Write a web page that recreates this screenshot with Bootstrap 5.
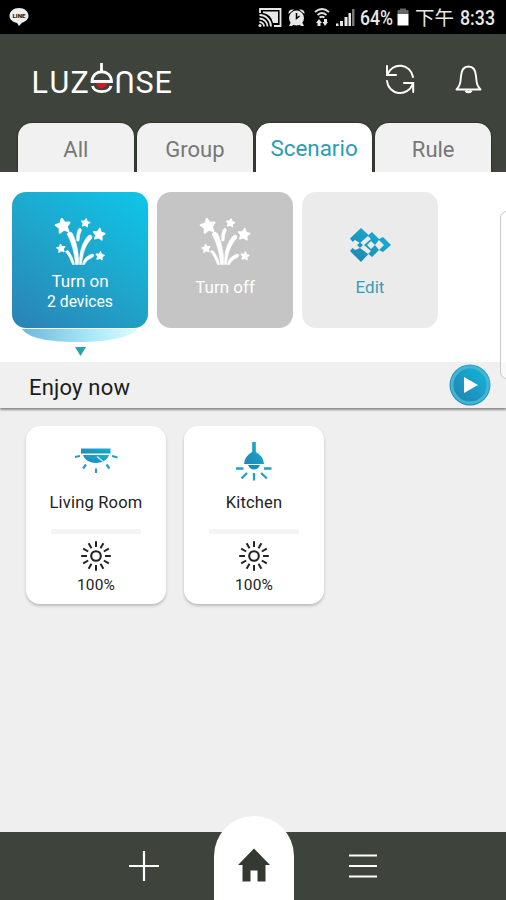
<!DOCTYPE html>
<html lang="en">
<head>
<meta charset="utf-8">
<meta name="viewport" content="width=device-width, initial-scale=1">
<title>Luzense</title>
<link href="https://cdn.jsdelivr.net/npm/bootstrap@5.3.0/dist/css/bootstrap.min.css" rel="stylesheet">
<style>
body{font-family:Roboto,"Noto Sans CJK TC",sans-serif;background:#efefef;height:900px;overflow:hidden;line-height:1}
svg{display:block;flex:none}
svg text{font-family:Roboto,"Noto Sans CJK TC",sans-serif}
.statusbar{height:34px;background:#000}
.topbar{height:89px;background:#3e433c;padding:0 22px 0 32px}
.topicons{gap:38px}
.tabs{height:49px;background:#3e433c;padding:0 15px 0 18px;gap:3.5px}
.tabs a{flex:1;height:49px;border-radius:14px 14px 0 0;background:#f1f1f1;color:#777;font-size:22px;text-decoration:none;padding-top:4px;box-shadow:0 0 2px #111a10}
.tabs a.active{background:#fff;color:#2a9db3;padding-top:2px;font-size:22.4px}
.scenes{height:190px;padding:20px 0 0 12px;gap:9px}
.tile{width:136px;height:136px;border-radius:14px;background:#c5c5c5;color:#fff;font-size:17px}
.tile-on{background:linear-gradient(35deg,#2b82b5 0%,#1fa5cb 50%,#0fc3e6 95%)}
.tile-on svg,.tile-off svg{margin-top:26px}
.tile-on .title{margin-top:5px}
.tile-on .count{font-size:15.7px;margin-top:4px}
.tile-off .title{margin-top:11px}
.tile-edit{background:#ebebeb;color:#359eb7}
.tile-edit svg{margin-top:36px}
.tile-edit .title{margin-top:15px}
.swoosh{left:18px;top:157px;z-index:0}
.edge{right:-8px;top:39px;width:14px;height:168px;border:1.5px solid #c8c8c8;border-radius:8px;z-index:2;background:#fff9}
.nowbar{height:46px;background:#f0f0f0;padding:0 15px 0 29px;color:#1b1b1b;box-shadow:0 1.5px 2px #8c8c8c}
.nowbar span{font-size:22px;letter-spacing:.2px;padding-top:5px}
.devices{padding:18px 26px;gap:18px}
.device{width:140px;height:178px;border-radius:14px;background:#fff;box-shadow:0 2px 3px #bbb;color:#222}
.device .label{font-size:16.5px;letter-spacing:.2px;margin-top:13px}
.device .sep{width:90px;height:5px;background:#f4f4f4;margin-top:17px;border-radius:2px}
.device .sunny{margin-top:6px}
.device .level{font-size:15.5px;letter-spacing:.1px;margin-top:6px}
.bottom{height:68px;background:#3e433c;padding-left:129px;gap:190px}
.home{width:80px;height:84px;left:213.5px;bottom:0;background:#fff;border-radius:40px 40px 0 0}
.home svg{margin-top:31px}
</style>
<script src="https://cdn.jsdelivr.net/npm/bootstrap@5.3.0/dist/js/bootstrap.bundle.min.js"></script>
</head>
<body class="d-flex flex-column">
<svg width="0" height="0" class="position-absolute">
<defs>
<linearGradient id="blue" x1="0" y1="1" x2="1" y2="0"><stop offset="0" stop-color="#2383ae"/><stop offset="1" stop-color="#12b4dc"/></linearGradient>
<linearGradient id="pale"><stop offset="0" stop-color="#70b7dc"/><stop offset=".6" stop-color="#a9e9f8"/><stop offset="1" stop-color="#e0fcff"/></linearGradient>
<path id="star" d="M0-1 .3-.38 .96-.3 .48.16 .6.82 0 .5-.6.82-.48.16-.96-.3-.3-.38Z"/>
<symbol id="firework" viewBox="0 0 52 50">
<g fill="#fff" stroke="#fff" stroke-width=".3" stroke-linejoin="round">
<use href="#star" transform="translate(9 8) rotate(-10) scale(7.2)"/>
<use href="#star" transform="translate(31.500 5) rotate(10) scale(4.2)"/>
<use href="#star" transform="translate(45 16.500) rotate(8) scale(5.800)"/>
<use href="#star" transform="translate(7 30.500) rotate(-8) scale(4.200)"/>
<use href="#star" transform="translate(46 38) rotate(8) scale(4.200)"/>
</g>
<g fill="#fff" stroke="#fff" stroke-width=".6"><path d="M13 16Q15 12.500 18.500 15.500C23 25 25 37 24.500 46.500H21.500C20.500 33 17 23 13 16Z"/>
<path d="M34 18Q38 15.500 38 20C31 27 28.500 36 27.500 46.500H25.500C25.500 36 27 26 34 18Z"/>
<path d="M24 12Q26 8.500 27.500 12Q25 17 25 23H22.800Q22 17 24 12Z"/>
<path d="M11.500 33.500Q14 31 15.500 34.500Q19 39 20.500 46.500H18.500Q16 39 11.500 33.500Z"/>
<path d="M28.500 46.500Q30 38 39 36Q41 38 38 39.500Q32 42 30.500 46.500Z"/></g>
</symbol>
<symbol id="sun" viewBox="0 0 32 32"><circle cx="16" cy="16" r="4.800" fill="none" stroke="#222" stroke-width="2.100"/>
<g stroke="#222" stroke-width="2"><path id="r" d="M16 1.200V7M16 25V30.800"/><use href="#r" transform="rotate(30 16 16)"/><use href="#r" transform="rotate(60 16 16)"/><use href="#r" transform="rotate(90 16 16)"/><use href="#r" transform="rotate(120 16 16)"/><use href="#r" transform="rotate(150 16 16)"/></g></symbol>
</defs></svg>

<header class="statusbar flex-shrink-0 d-flex justify-content-between align-items-center">
<svg width="40" height="34"><path d="M19 8C13.500 8 9.500 11.500 9.500 15.800C9.500 19.500 12.500 22 17 23L19 26L22 22.800C26 21.500 28.500 19 28.500 15.800C28.500 11.500 24.500 8 19 8Z" fill="#eee"/><text x="12.500" y="18.300" font-size="6" font-weight="900" textLength="13" lengthAdjust="spacingAndGlyphs" fill="#222">LINE</text></svg>
<svg width="248" height="34" fill="#e8e8e8">
<g fill="none" stroke="#e8e8e8" stroke-width="1.800"><path d="M2 13V9H22.500V26H16"/><path d="M1.500 22A4.500 4.500 0 0 1 6 26.500M1.500 18.500A8 8 0 0 1 9.500 26.500M1.500 15A11.500 11.500 0 0 1 13 26.500"/></g><path d="M5 11.500H20V23H15Q13 14 5 13Z"/><circle cx="2" cy="25.500" r="1.500"/>
<circle cx="38.500" cy="18" r="7.500"/><path d="M30.500 14Q30 9 36 9.500ZM46.500 14Q47 9 41 9.500ZM33 22L31 26H34L36 24ZM44 22L46 26H43L41 24Z"/><path d="M38.500 13V18.500L41.500 16" fill="none" stroke="#000" stroke-width="1.500"/>
<g fill="none" stroke="#ddd" stroke-width="1.800"><path d="M57 12Q64 6 71 12M59.500 15Q64 11 68.500 15M61.500 17.500Q64 16 66.500 17.500"/></g><path d="M61 19L64 23H62.500V26H59.500V23H58ZM67 26L64.500 22H66V19H69V22H70Z"/>
<path d="M78 26V23.500H80.500V26ZM82 26V21H85V26ZM86.500 26V17H89.500V26Z"/><path d="M90.500 26V13H93V26Z"/><path d="M94 26V9H96.500V26Z" fill="#777"/>
<text x="102" y="24.500" font-size="20.500" font-weight="500" textLength="33" lengthAdjust="spacingAndGlyphs">64%</text>
<path d="M142 8.500H148V10H150.500V14H139.500V10H142Z" fill="#666"/><path d="M139.500 14H150.500V25.500H139.500Z" fill="#fff"/>
<text x="157" y="24.500" font-size="19.500" textLength="39" lengthAdjust="spacingAndGlyphs">下午</text>
<text x="202" y="24.500" font-size="20.500" font-weight="500" textLength="35" lengthAdjust="spacingAndGlyphs">8:33</text>
</svg>
</header>

<div class="topbar flex-shrink-0 d-flex align-items-center justify-content-between">
<svg width="144" height="40" viewBox="32 60 144 40" fill="#fff" role="img" aria-label="LUZENSE">
<g font-size="30.500">
<text x="31.500" y="93.500">L</text><text x="49.500" y="93.500">U</text><text x="70.500" y="93.500">Z</text>
<text transform="translate(134.500 71.800) rotate(180)">U</text><text x="135.500" y="93.500">S</text><text x="154.500" y="93.500">E</text></g>
<g fill="none" stroke="#fff" stroke-width="2.800"><path d="M101.500 64V72"/><path d="M92 82.500C92 69.500 111.500 69.500 111.500 82.500Z"/><path d="M92.500 87C94.500 94.500 109 94.500 111 87"/></g><path d="M96 84H107.500Q106 89 101.500 89T96 84Z" fill="#d71920"/></svg>
<div class="topicons d-flex align-items-center">
<svg width="32" height="32" viewBox="384 63 32 32" fill="none" stroke="#fff" stroke-width="2" stroke-linecap="round"><path d="M413 77A13.200 13.200 0 0 0 387.500 74.500M387 66V75H396M387 81A13.200 13.200 0 0 0 412.500 84.500M413.200 92V83H404"/></svg>
<svg width="30" height="32" viewBox="454 63 30 32" fill="none" stroke="#fff" stroke-width="1.900" stroke-linejoin="round"><path d="M456.500 89.500C460 86 460.500 83 461 76C461.500 69 464.500 66.500 468.500 66.500S475.500 69 476 76C476.500 83 477 86 480.500 89.500Z"/><path d="M465.500 90.500Q468.500 93.500 471.500 90.500" stroke-width="2.500"/></svg>
</div></div>

<nav class="tabs flex-shrink-0 d-flex">
<a href="#" class="d-flex align-items-center justify-content-center">All</a>
<a href="#" class="d-flex align-items-center justify-content-center">Group</a>
<a href="#" class="active d-flex align-items-center justify-content-center">Scenario</a>
<a href="#" class="d-flex align-items-center justify-content-center">Rule</a>
</nav>

<section class="scenes flex-shrink-0 position-relative d-flex bg-white">
<svg class="swoosh position-absolute" width="124" height="28"><path d="M4 0C12 11 37 13 62 13S112 9 120 0Z" fill="url(#pale)"/><path d="M57 18H68L62.500 27Z" fill="#2aa0b2"/></svg>
<div class="tile tile-on position-relative d-flex flex-column align-items-center"><svg width="52" height="50"><use href="#firework"/></svg><div class="title">Turn on</div><div class="count">2 devices</div></div>
<div class="tile tile-off d-flex flex-column align-items-center"><svg width="52" height="50"><use href="#firework"/></svg><div class="title">Turn off</div></div>
<div class="tile tile-edit d-flex flex-column align-items-center">
<svg width="42" height="36" viewBox="349 228 42 36"><path d="M350 238.500L361 228L368.500 235L372 232L379 239L383 237L391 245L383 252L379 250L372 257L368.500 254L361 262L350 251L355 245Z" fill="url(#blue)"/><g fill="#ebebeb"><path d="M350 244L355 240L360 243L368 236L371 239L364 245L371 251L368 254L360 248L355 250L350 246Z"/><path d="M371 241L375 245L371 249L367 245ZM379 240L384 245L379 250L375 245Z"/></g><path d="M357 245L360 242.500L363 245L360 248Z" fill="#2494be"/></svg>
<div class="title">Edit</div></div>
<div class="edge position-absolute"></div>
</section>

<section class="nowbar flex-shrink-0 d-flex align-items-center justify-content-between position-relative">
<span>Enjoy now</span>
<svg width="42" height="42"><circle cx="21" cy="21" r="20.500" fill="url(#blue)"/><circle cx="21" cy="21" r="18" fill="none" stroke="#48b3d2" stroke-width="3"/><circle cx="21" cy="21" r="16" fill="url(#blue)"/><path d="M15 13L29 21L15 29Z" fill="#fff"/></svg>
</section>

<main class="devices flex-grow-1 d-flex align-items-start">
<div class="device d-flex flex-column align-items-center">
<svg width="44" height="40" viewBox="74 442 44 40" class="mt-3"><path d="M81 448.500H110.500V453.500H81Z" fill="url(#blue)"/><path d="M83 455H109C106 465.500 86 465.500 83 455Z" fill="url(#blue)"/><path d="M97 456.500L103 461.500" stroke="#c9edf6" stroke-width="1.500"/><path d="M75 457L80 456M112 456L117.500 457.500M83 468.500L86 464.500M96 468.500V473M106.500 464.500L109.500 468.500" stroke="#22a0c6" stroke-width="2.200" fill="none"/></svg>
<div class="label">Living Room</div><div class="sep"></div><svg class="sunny" width="32" height="32"><use href="#sun"/></svg><div class="level">100%</div>
</div>
<div class="device d-flex flex-column align-items-center">
<svg width="38" height="40" viewBox="235 441 38 40" class="mt-3"><path d="M252.200 441H255.800V451Q263.500 455 264 463H244Q244.500 455 252.200 451Z" fill="url(#blue)"/><path d="M248 464H260Q258 468.500 254 468.500T248 464Z" fill="#128fbd"/><path d="M236 467.500H243.500M264 467.500H271.500M241.500 477.500L247 472M254 472V479.500M261 472L267 477.500" stroke="#22a0c6" stroke-width="2.300"/></svg>
<div class="label">Kitchen</div><div class="sep"></div><svg class="sunny" width="32" height="32"><use href="#sun"/></svg><div class="level">100%</div>
</div>
</main>

<footer class="bottom flex-shrink-0 d-flex align-items-center position-relative">
<svg width="30" height="30" stroke="#fff" stroke-width="2.200"><path d="M0 15H30M15 0V30"/></svg>
<div class="home position-absolute d-flex justify-content-center"><svg width="34" height="36" viewBox="237 847 34 36" fill="#343a32"><path d="M254 848.500L270 865H265.500V881.500H257.500V870.500H250.500V881.500H242.500V865H238Z"/></svg></div>
<svg width="28" height="26" stroke="#fff" stroke-width="2.200"><path d="M0 2.500H28M0 13H28M0 23.500H28"/></svg>
</footer>
</body>
</html>
